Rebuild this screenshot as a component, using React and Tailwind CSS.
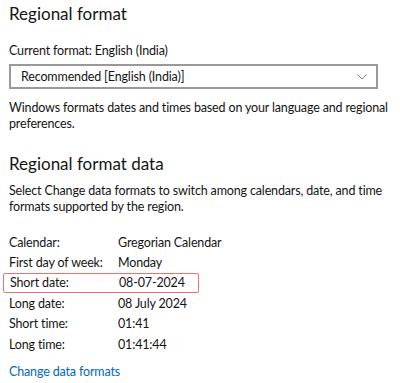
const rows = [
  ["Calendar:", "Gregorian Calendar"],
  ["First day of week:", "Monday"],
  ["Short date:", "08-07-2024"],
  ["Long date:", "08 July 2024"],
  ["Short time:", "01:41"],
  ["Long time:", "01:41:44"],
]

function App() {
  return (
    <div className="w-[400px] h-[383px] bg-white text-[#141414] overflow-hidden px-[9px] text-[12.5px] tracking-[-0.15px] leading-[17px]" style={{ fontFamily: 'Lato, sans-serif' }}>
      <h1 className="text-[17px] tracking-normal leading-[26px] pt-[1px]">Regional format</h1>

      <p className="mt-[15px]">Current format: English (India)</p>

      <div className="mt-[5px] w-[369px] h-[25px] border-2 border-[#999999] flex items-center justify-between pl-[10px] pr-[7px]">
        <span>Recommended [English (India)]</span>
        <svg width="10" height="6" viewBox="0 0 10 6" className="mr-[2px]">
          <path d="M0.5 0.5 L5 5 L9.5 0.5" fill="none" stroke="#777" strokeWidth="0.9" />
        </svg>
      </div>

      <p className="mt-[11px] leading-[16px]">
        Windows formats dates and times based on your language and regional preferences.
      </p>

      <h2 className="text-[17px] tracking-normal leading-[26px] mt-[19px]">Regional format data</h2>

      <p className="mt-[6px] leading-[16px]">
        Select Change data formats to switch among calendars, date, and time formats supported by the region.
      </p>

      <div className="mt-[17px] flex flex-col">
        {rows.map(([label, value]) => (
          <div
            key={label}
            className={
              label === "Short date:"
                ? "flex h-[20.4px] items-center -mx-[6px] px-[6px] w-[196px] border border-[#ee7070] rounded-[2px]"
                : "flex h-[20.4px] items-center"
            }
          >
            <span className="w-[109px] shrink-0">{label}</span>
            <span>{value}</span>
          </div>
        ))}
      </div>

      <a href="#" className="block mt-[9px] text-[#0067c0]">Change data formats</a>
    </div>
  )
}

export default App
